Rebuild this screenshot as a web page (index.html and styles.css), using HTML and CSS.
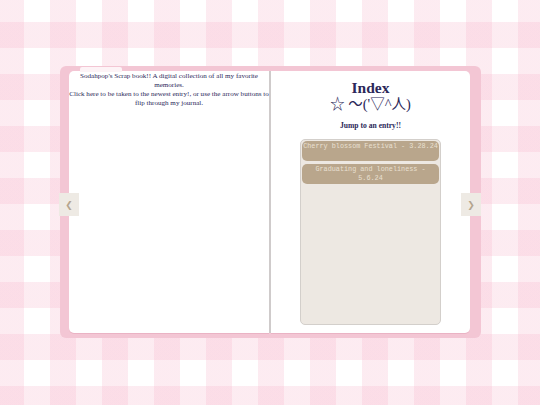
FILE: index.html
```html
<!DOCTYPE html>
<html>
<head>
<meta charset="utf-8">
<title>Sodahpop's Scrap book</title>
<link rel="stylesheet" href="styles.css">
</head>
<body>
<div class="book">
  <div class="tab"></div>
  <div class="page page-left">
    <p class="intro">Sodahpop's Scrap book!! A digital collection of all my favorite memories.<br>Click here to be taken to the newest entry!, or use the arrow buttons to flip through my journal.</p>
  </div>
  <div class="spine"></div>
  <div class="page page-right">
    <h1 class="title">Index<br><span class="kaomoji">☆ 〜('▽^人)</span></h1>
    <h2 class="jump">Jump to an entry!!</h2>
    <div class="entries">
      <div class="entry">Cherry blossom Festival - 3.28.24</div>
      <div class="entry">Graduating and loneliness - 5.6.24</div>
    </div>
  </div>
  <button class="nav nav-prev">❮</button>
  <button class="nav nav-next">❯</button>
</div>
</body>
</html>
```

FILE: styles.css
```css
html, body {
  margin: 0;
  height: 100%;
}

/* pink gingham: two translucent stripe sets crossing on white */
body {
  background-color: #ffffff;
  background-image:
    linear-gradient(90deg, transparent 24px, rgba(246, 180, 202, 0.26) 24px, rgba(246, 180, 202, 0.26) 50px, transparent 50px),
    linear-gradient(180deg, rgba(246, 180, 202, 0.26) 24px, transparent 24px, transparent 50px, rgba(246, 180, 202, 0.26) 50px);
  background-size: 52px 52px;
  background-position: 26px -2px, 0 24px;
  font-family: "Liberation Serif", "Times New Roman", serif;
  color: #2b2859;
  overflow: hidden;
}

.book {
  position: relative;
  box-sizing: border-box;
  width: 421px;
  height: 272px;
  margin: 66px 0 0 60px;
  padding: 5px 11px 5px 9px;
  background: #f3c6d4;
  border-radius: 6px;
  display: flex;
}

.tab {
  position: absolute;
  left: 20px;
  top: 1px;
  width: 42px;
  height: 5px;
  background: #fdf3f6;
  border-radius: 2px 2px 0 0;
}

.page {
  background: #ffffff;
  box-shadow: 0 1px 0 #eab3c4;
}

.page-left {
  width: 200px;
  border-radius: 5px 0 0 5px;
}

.spine {
  width: 2px;
  background: #cfcbcb;
}

.page-right {
  width: 199px;
  border-radius: 0 5px 5px 0;
  display: flex;
  flex-direction: column;
  align-items: center;
}

.intro {
  margin: 1px 0 0;
  font-size: 7.1px;
  line-height: 9px;
  text-align: center;
}

.title {
  margin: 9px 0 0;
  font-size: 15.5px;
  line-height: 16px;
  text-align: center;
}

.kaomoji {
  font-family: "Liberation Serif", "Noto Sans CJK JP", serif;
  font-weight: normal;
  font-size: 14.5px;
}

.jump {
  margin: 9px 0 0;
  font-size: 7.6px;
  line-height: 10px;
}

.entries {
  box-sizing: border-box;
  width: 141px;
  height: 186px;
  margin-top: 8px;
  padding: 1px;
  background: #ede8e2;
  border: 1px solid #d3cfcb;
  border-radius: 5px;
  display: flex;
  flex-direction: column;
  gap: 3px;
}

.entry {
  box-sizing: border-box;
  min-height: 20px;
  padding: 1px 1px 0;
  background: #b9a68c;
  border-radius: 5px;
  color: #e9e0d2;
  font-family: "Liberation Mono", "Courier New", monospace;
  font-size: 6.8px;
  line-height: 9px;
  text-align: center;
}

.nav {
  position: absolute;
  top: 127px;
  width: 20px;
  height: 23px;
  padding: 0;
  border: none;
  background: #eeeae4;
  color: #b4a58e;
  font-size: 9px;
  font-family: "DejaVu Sans", sans-serif;
}

.nav-prev {
  left: -1px;
}

.nav-next {
  right: 0;
}
```
